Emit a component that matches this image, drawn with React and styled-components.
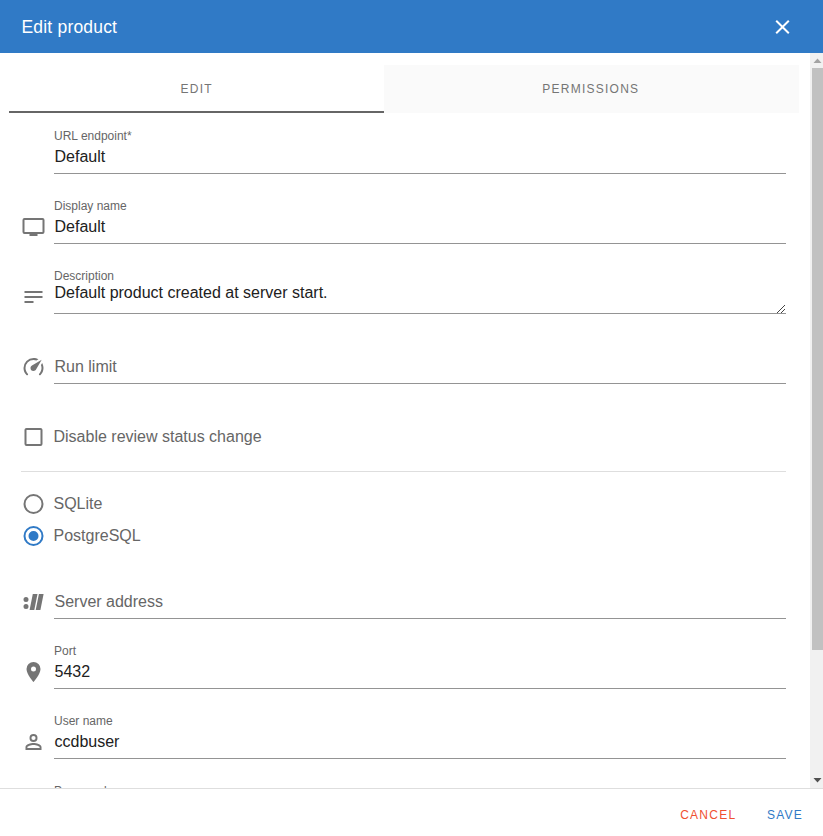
import React from "react";
import styled, { createGlobalStyle } from "styled-components";

const Global = createGlobalStyle`
  * { box-sizing: border-box; }
  body { margin: 0; background: #fff; font-family: "Liberation Sans", Arial, sans-serif; }
`;

const Dialog = styled.div`
  display: flex;
  flex-direction: column;
  width: 823px;
  height: 836px;
  overflow: hidden;
`;

const Header = styled.header`
  display: flex;
  align-items: center;
  justify-content: space-between;
  flex: none;
  height: 53px;
  padding: 0 28px 0 21.5px;
  background: #307ac6;
  color: #fff;
`;

const Title = styled.h1`
  margin: 0;
  font-size: 17.5px;
  font-weight: 400;
  letter-spacing: 0.19px;
  line-height: 32px;
`;

const CloseButton = styled.button`
  display: flex;
  padding: 0;
  border: 0;
  background: none;
  color: inherit;
`;

const Body = styled.div`
  display: flex;
  flex: none;
  height: 735px;
`;

const Content = styled.div`
  flex: 1;
  height: 735px;
  padding: 12px 11px 0 9px;
  overflow: hidden;
`;

const Tabs = styled.div`
  display: flex;
  height: 48px;
`;

const Tab = styled.div`
  width: ${(p) => (p.$active ? 375 : 415)}px;
  padding-${(p) => (p.$active ? "left: 0.4px" : "right: 1.4px")};
  border-bottom: ${(p) => (p.$active ? "2px solid #666" : "0")};
  background: ${(p) => (p.$active ? "#fff" : "#fafafa")};
  color: #757575;
  font-size: 12px;
  letter-spacing: 1.25px;
  line-height: 48px;
  text-align: center;
`;

const Form = styled.form`
  padding: 5px 13px 0 12px;
`;

const FieldRow = styled.div`
  display: flex;
  height: 56px;
  margin-bottom: 14px;
`;

const IconSlot = styled.div`
  flex: none;
  width: 33px;
  padding-top: 27px;
  color: #757575;
`;

const Icon = styled.svg`
  display: block;
  width: 25px;
  height: 24px;
  fill: currentColor;
`;

const FieldBox = styled.div`
  display: flex;
  flex-direction: column;
  flex: 1;
  padding-top: 8px;
  border-bottom: 1px solid #949494;
`;

const Label = styled.label`
  height: 20px;
  color: #666;
  font-size: 12px;
  line-height: 20px;
`;

const Value = styled.div`
  display: flex;
  justify-content: space-between;
  margin-top: ${(p) => (p.$multiline ? -4 : 0)}px;
  padding-left: 0.5px;
  color: ${(p) => (p.$placeholder ? "#666" : "#212121")};
  font-size: 16px;
  line-height: 22px;
`;

const ResizeGrip = styled.svg`
  width: 9px;
  height: 9px;
  margin: 22px 1px -9px 0;
  fill: none;
  stroke: #444;
`;

const Choice = styled.div`
  display: flex;
  align-items: center;
  gap: 7.5px;
  height: 32px;
  color: ${(p) => (p.$checked ? "#307ac6" : "#757575")};
`;

const ChoiceText = styled.span`
  color: #666;
  font-size: 16px;
  line-height: 20px;
`;

const ReviewGroup = styled.div`
  height: 74px;
  padding-top: 23px;
  border-bottom: 1px solid #dedede;
`;

const DatabaseGroup = styled.div`
  height: 91px;
  padding-top: 16px;
`;

const ScrollTrack = styled.div`
  display: flex;
  flex-direction: column;
  align-items: flex-end;
  width: 13px;
  background: #f1f1f1;
`;

const ScrollArrow = styled.svg`
  display: block;
  width: 11px;
  height: 15px;
  fill: ${(p) => (p.$dim ? "#a3a3a3" : "#505050")};
`;

const ScrollThumb = styled.div`
  width: 11px;
  height: 582px;
  margin-bottom: auto;
  background: #c1c1c1;
`;

const Footer = styled.footer`
  display: flex;
  flex: 1;
  justify-content: flex-end;
  align-items: center;
  gap: 30.5px;
  padding: 4px 20px 0 0;
  border-top: 1px solid #dedede;
`;

const Action = styled.button`
  padding: 0;
  border: 0;
  background: none;
  color: ${(p) => (p.$danger ? "#f05030" : "#307ac6")};
  font-family: inherit;
  font-size: 12px;
  letter-spacing: 1.25px;
  line-height: 20px;
`;

const paths = {
  television:
    "M21,17H3V5H21M21,3H3A2,2 0 0,0 1,5V17A2,2 0 0,0 3,19H8V21H16V19H21A2,2 0 0,0 23,17V5A2,2 0 0,0 21,3Z",
  text: "M21,6V8H3V6H21M3,18H12V16H3V18M3,13H21V11H3V13Z",
  speed:
    "M12,16A3,3 0 0,1 9,13C9,11.88 9.61,10.9 10.5,10.39L20.21,4.77L14.68,14.35C14.18,15.33 13.17,16 12,16M12,3C13.81,3 15.5,3.5 16.97,4.32L14.87,5.53C14,5.19 13,5 12,5A8,8 0 0,0 4,13C4,15.21 4.89,17.21 6.34,18.65H6.35C6.74,19.04 6.74,19.67 6.35,20.06C5.96,20.45 5.32,20.45 4.93,20.07V20.07C3.12,18.26 2,15.76 2,13A10,10 0 0,1 12,3M22,13C22,15.76 20.88,18.26 19.07,20.07V20.07C18.68,20.45 18.05,20.45 17.66,20.06C17.27,19.67 17.27,19.04 17.66,18.65V18.65C19.11,17.2 20,15.21 20,13C20,12 19.81,11 19.46,10.1L20.67,8C21.5,9.5 22,11.18 22,13Z",
  protocol:
    "M4.5,7A2.5,2.5 0 1,1 4.5,12A2.5,2.5 0 1,1 4.5,7M4.5,14A2.5,2.5 0 1,1 4.5,19A2.5,2.5 0 1,1 4.5,14M11.3,4H16L12.8,20H8.1L11.3,4M17.4,4H22.1L18.9,20H14.2L17.4,4Z",
  marker:
    "M12,11.5A2.5,2.5 0 0,1 9.5,9A2.5,2.5 0 0,1 12,6.5A2.5,2.5 0 0,1 14.5,9A2.5,2.5 0 0,1 12,11.5M12,2A7,7 0 0,0 5,9C5,14.25 12,22 12,22C12,22 19,14.25 19,9A7,7 0 0,0 12,2Z",
  account:
    "M12,4A4,4 0 0,1 16,8A4,4 0 0,1 12,12A4,4 0 0,1 8,8A4,4 0 0,1 12,4M12,5.9A2.1,2.1 0 1,0 12,10.1A2.1,2.1 0 0,0 12,5.9M12,13C14.67,13 20,14.33 20,17V20H4V17C4,14.33 9.33,13 12,13M12,14.9C9.03,14.9 5.9,16.36 5.9,17V18.1H18.1V17C18.1,16.36 14.97,14.9 12,14.9Z",
  checkbox:
    "M19,3H5C3.89,3 3,3.89 3,5V19A2,2 0 0,0 5,21H19A2,2 0 0,0 21,19V5C21,3.89 20.1,3 19,3M19,5V19H5V5H19Z",
  radioOff:
    "M12,20A8,8 0 0,1 4,12A8,8 0 0,1 12,4A8,8 0 0,1 20,12A8,8 0 0,1 12,20M12,2A10,10 0 0,0 2,12A10,10 0 0,0 12,22A10,10 0 0,0 22,12A10,10 0 0,0 12,2Z",
  radioOn:
    "M12,20A8,8 0 0,1 4,12A8,8 0 0,1 12,4A8,8 0 0,1 20,12A8,8 0 0,1 12,20M12,2A10,10 0 0,0 2,12A10,10 0 0,0 12,22A10,10 0 0,0 22,12A10,10 0 0,0 12,2M12,7A5,5 0 0,0 7,12A5,5 0 0,0 12,17A5,5 0 0,0 17,12A5,5 0 0,0 12,7Z",
  close:
    "M19,6.41L17.59,5L12,10.59L6.41,5L5,6.41L10.59,12L5,17.59L6.41,19L12,13.41L17.59,19L19,17.59L13.41,12L19,6.41Z",
};

function Glyph({ name }) {
  return (
    <Icon viewBox="-0.5 0 25 24">
      <path fillRule="evenodd" d={paths[name]} />
    </Icon>
  );
}

function Field({ icon, label, value, placeholder, multiline }) {
  return (
    <FieldRow>
      <IconSlot>{icon && <Glyph name={icon} />}</IconSlot>
      <FieldBox>
        <Label>{label}</Label>
        <Value $placeholder={!!placeholder} $multiline={multiline}>
          {value || placeholder}
          {multiline && (
            <ResizeGrip viewBox="0 0 9 9">
              <path d="M1 9L9 1M5 9L9 5" />
            </ResizeGrip>
          )}
        </Value>
      </FieldBox>
    </FieldRow>
  );
}

function Option({ icon, checked, children }) {
  return (
    <Choice $checked={checked}>
      <Glyph name={icon} />
      <ChoiceText>{children}</ChoiceText>
    </Choice>
  );
}

export default function App() {
  return (
    <Dialog>
      <Global />
      <Header>
        <Title>Edit product</Title>
        <CloseButton type="button" aria-label="Close">
          <Glyph name="close" />
        </CloseButton>
      </Header>
      <Body>
        <Content>
          <Tabs>
            <Tab $active>EDIT</Tab>
            <Tab>PERMISSIONS</Tab>
          </Tabs>
          <Form>
            <Field label="URL endpoint*" value="Default" />
            <Field icon="television" label="Display name" value="Default" />
            <Field icon="text" label="Description" value="Default product created at server start." multiline />
            <Field icon="speed" placeholder="Run limit" />
            <ReviewGroup>
              <Option icon="checkbox">Disable review status change</Option>
            </ReviewGroup>
            <DatabaseGroup>
              <Option icon="radioOff">SQLite</Option>
              <Option icon="radioOn" checked>PostgreSQL</Option>
            </DatabaseGroup>
            <Field icon="protocol" placeholder="Server address" />
            <Field icon="marker" label="Port" value="5432" />
            <Field icon="account" label="User name" value="ccdbuser" />
            <Field label="Password" />
          </Form>
        </Content>
        <ScrollTrack>
          <ScrollArrow $dim viewBox="0 0 11 15">
            <path d="M5.5 5.5L9.5 10H1.5Z" />
          </ScrollArrow>
          <ScrollThumb />
          <ScrollArrow viewBox="0 0 11 15">
            <path d="M5.5 9.5L9.5 5H1.5Z" />
          </ScrollArrow>
        </ScrollTrack>
      </Body>
      <Footer>
        <Action $danger>CANCEL</Action>
        <Action>SAVE</Action>
      </Footer>
    </Dialog>
  );
}
